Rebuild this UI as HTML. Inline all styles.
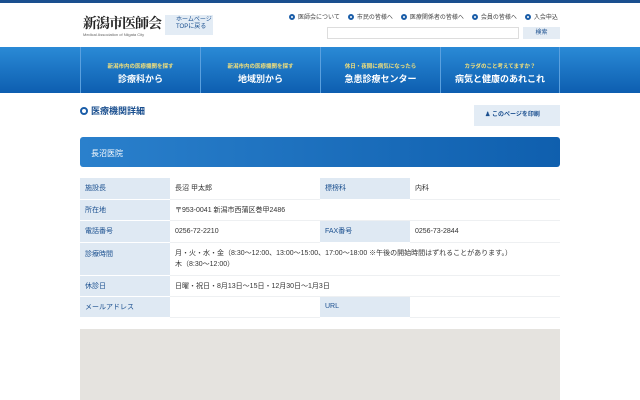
<!DOCTYPE html>
<html><head><meta charset="utf-8"><style>
*{margin:0;padding:0;box-sizing:border-box}
body{width:640px;height:400px;overflow:hidden;background:#fff;font-family:"Liberation Sans","Noto Sans CJK JP",sans-serif;color:#333;position:relative}
.a{position:absolute}
.top{left:0;top:0;width:640px;height:3px;background:#1a4f8f}
.logo{left:83px;top:13px;font-size:14px;font-weight:bold;color:#222;letter-spacing:-1px;white-space:nowrap;font-family:"Noto Serif CJK SC",serif}
.logosub{left:83px;top:32px;font-size:4px;color:#666;white-space:nowrap}
.home{left:165px;top:15px;width:48px;height:20px;background:#e3ecf5;font-size:6px;color:#1a4f8f;padding:2px 0 0 11px;line-height:7px}
.dot{display:inline-block;width:6px;height:6px;border-radius:50%;border:2px solid #1a5da8;vertical-align:-1px;margin-right:3px}
.links{left:289px;top:12px;font-size:6px;color:#444;white-space:nowrap}
.links span{margin-right:8px}
.search{left:327px;top:27px;width:192px;height:12px;border:1px solid #ddd}
.sbtn{left:523px;top:27px;width:37px;height:12px;background:#e4ecf4;font-size:6px;color:#1a4f8f;text-align:center;line-height:12px}
.nav{left:0;top:47px;width:640px;height:46px;background:linear-gradient(#2a8ad6,#0d5eb0)}
.nc{top:47px;height:46px;width:120px;border-left:1px solid #5aa0df;text-align:center;color:#fff}
.nc .s{font-size:5.5px;color:#f3e07a;margin-top:15px;font-weight:bold}
.nc .b{font-size:9px;font-weight:bold;margin-top:2px}
.ttl{left:80px;top:104px;font-size:9px;font-weight:bold;color:#1a4f8f}
.pbtn{left:474px;top:105px;width:86px;height:21px;background:#e3ecf5;font-size:6px;color:#1a4f8f;font-weight:bold;line-height:21px;padding-left:11px}
.bar{left:80px;top:137px;width:480px;height:30px;border-radius:3px;background:linear-gradient(90deg,#2a80cc,#0f5fae);color:#fff;font-size:8px;padding:11px 0 0 11px}
table{position:absolute;left:80px;top:178px;width:480px;border-collapse:collapse;font-size:7px}
td{border-bottom:1px solid #eef0f2;padding:0 5px;height:21px;vertical-align:middle;color:#333}
td.l{background:#dfe9f3;color:#1a4f8f;width:90px;border-bottom:1px solid #fff}
td.v{width:150px}
.map{left:80px;top:329px;width:480px;height:71px;background:#e5e3df}
</style></head><body>
<div class="a top"></div>
<div class="a logo">新潟市医師会</div>
<div class="a logosub">Medical Association of Niigata City</div>
<div class="a home">ホームページ<br>TOPに戻る</div>
<div class="a links"><span><i class="dot"></i>医師会について</span><span><i class="dot"></i>市民の皆様へ</span><span><i class="dot"></i>医療関係者の皆様へ</span><span><i class="dot"></i>会員の皆様へ</span><span style="margin:0"><i class="dot"></i>入会申込</span></div>
<div class="a search"></div>
<div class="a sbtn">検索</div>
<div class="a nav"></div>
<div class="a nc" style="left:80px"><div class="s">新潟市内の医療機関を探す</div><div class="b">診療科から</div></div>
<div class="a nc" style="left:200px"><div class="s">新潟市内の医療機関を探す</div><div class="b">地域別から</div></div>
<div class="a nc" style="left:320px"><div class="s">休日・夜間に病気になったら</div><div class="b">急患診療センター</div></div>
<div class="a nc" style="left:440px;border-right:1px solid #5aa0df"><div class="s">カラダのこと考えてますか？</div><div class="b">病気と健康のあれこれ</div></div>
<div class="a ttl"><i class="dot" style="width:8px;height:8px"></i>医療機関詳細</div>
<div class="a pbtn">&#9823; このページを印刷</div>
<div class="a bar">長沼医院</div>
<table>
<tr><td class="l">施設長</td><td class="v">長沼 甲太郎</td><td class="l">標榜科</td><td>内科</td></tr>
<tr><td class="l">所在地</td><td colspan="3">〒953-0041 新潟市西蒲区巻甲2486</td></tr>
<tr><td class="l" style="height:22px">電話番号</td><td class="v">0256-72-2210</td><td class="l">FAX番号</td><td>0256-73-2844</td></tr>
<tr><td class="l" style="height:33px;vertical-align:top;padding-top:6px">診療時間</td><td colspan="3" style="line-height:11px">月・火・水・金（8:30〜12:00、13:00〜15:00、17:00〜18:00 ※午後の開始時間はずれることがあります。）<br>木（8:30〜12:00）</td></tr>
<tr><td class="l">休診日</td><td colspan="3">日曜・祝日・8月13日〜15日・12月30日〜1月3日</td></tr>
<tr><td class="l">メールアドレス</td><td class="v"></td><td class="l">URL</td><td></td></tr>
</table>
<div class="a map"></div>
</body></html>
